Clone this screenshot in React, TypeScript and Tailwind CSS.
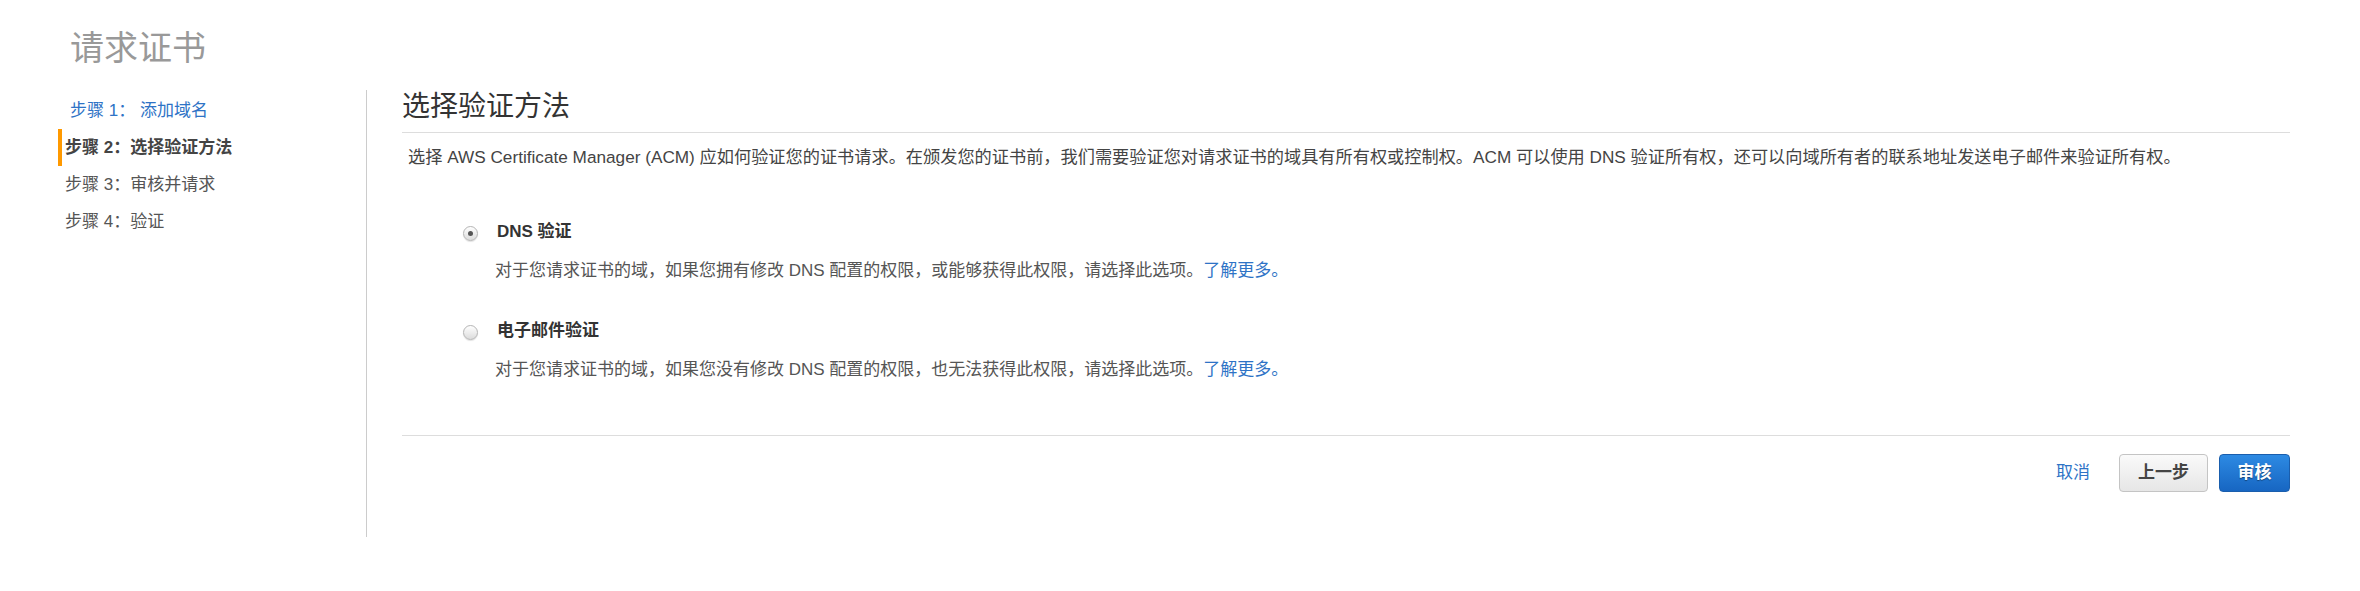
import React from 'react';

const steps = [
  { label: '步骤 1： 添加域名', state: 'done' },
  { label: '步骤 2：选择验证方法', state: 'active' },
  { label: '步骤 3：审核并请求', state: 'todo' },
  { label: '步骤 4：验证', state: 'todo' },
];

const options = [
  {
    id: 'dns',
    title: 'DNS 验证',
    checked: true,
    text: '对于您请求证书的域，如果您拥有修改 DNS 配置的权限，或能够获得此权限，请选择此选项。',
  },
  {
    id: 'email',
    title: '电子邮件验证',
    checked: false,
    text: '对于您请求证书的域，如果您没有修改 DNS 配置的权限，也无法获得此权限，请选择此选项。',
  },
];

function Radio({ checked }: { checked: boolean }) {
  return (
    <span className="flex h-[15px] w-[15px] items-center justify-center rounded-full border border-[#b5b5b5] bg-gradient-to-b from-[#ffffff] to-[#dcdcdc] shadow-[0_1px_1px_rgba(0,0,0,0.12)]">
      {checked && <span className="h-[5px] w-[5px] rounded-full bg-[#555]" />}
    </span>
  );
}

export default function App() {
  return (
    <div className="min-h-screen bg-white font-['Liberation_Sans','Noto_Sans_CJK_SC',sans-serif] text-[#444]">
      <h1 className="pl-[70px] pt-[25px] text-[34px] leading-[46px] font-normal text-[#999]">
        请求证书
      </h1>

      <div className="mt-[19px] flex">
        {/* Wizard steps */}
        <aside className="h-[447px] w-[367px] shrink-0 border-r border-[#ccc] pl-[58px] pt-[2px]">
          {steps.map((step) => (
            <div
              key={step.label}
              className={`flex h-[37px] items-center border-l-4 text-[17px] ${
                step.state === 'active'
                  ? 'border-[#ff9900] pl-[3px] font-bold text-[#444]'
                  : step.state === 'done'
                    ? 'border-transparent pl-[8px] text-[#2e73c6]'
                    : 'border-transparent pl-[3px] text-[#555]'
              }`}
            >
              {step.label}
            </div>
          ))}
        </aside>

        {/* Main panel */}
        <main className="flex-1 pl-[35px] pr-[70px]">
          <h2 className="border-b border-[#ddd] pb-[8px] text-[28px] leading-[34px] font-normal text-[#333]">
            选择验证方法
          </h2>
          <p className="mt-[12px] pl-[6px] text-[17.2px] leading-[24px] text-[#444]">
            选择 AWS Certificate Manager (ACM) 应如何验证您的证书请求。在颁发您的证书前，我们需要验证您对请求证书的域具有所有权或控制权。ACM 可以使用 DNS 验证所有权，还可以向域所有者的联系地址发送电子邮件来验证所有权。
          </p>

          <div className="mt-[51px] flex flex-col gap-[36px] pl-[61px]">
            {options.map((opt) => (
              <div key={opt.id}>
                <label className="flex h-[24px] items-center">
                  <span className="mt-[3px] w-[34px]">
                    <Radio checked={opt.checked} />
                  </span>
                  <span className="text-[17px] font-bold text-[#333]">{opt.title}</span>
                </label>
                <p className="mt-[15px] pl-[32px] text-[17px] leading-[24px] text-[#555]">
                  {opt.text}
                  <a className="text-[#2e73c6]">了解更多。</a>
                </p>
              </div>
            ))}
          </div>

          <div className="mt-[53px] border-t border-[#ddd] pt-[18px]">
            <div className="flex items-center justify-end">
              <a className="mr-[29px] text-[17px] text-[#2e73c6]">取消</a>
              <button className="mr-[11px] h-[38px] w-[89px] rounded-[4px] border border-[#c4c4c4] bg-gradient-to-b from-[#fafafa] to-[#e6e6e6] text-[17px] font-bold text-[#444]">
                上一步
              </button>
              <button className="h-[38px] w-[71px] rounded-[4px] border border-[#1a5ead] bg-gradient-to-b from-[#2d8ae3] to-[#1766c2] text-[17px] font-bold text-white [text-shadow:0_1px_1px_rgba(0,0,0,0.4)]">
                审核
              </button>
            </div>
          </div>
        </main>
      </div>
    </div>
  );
}
